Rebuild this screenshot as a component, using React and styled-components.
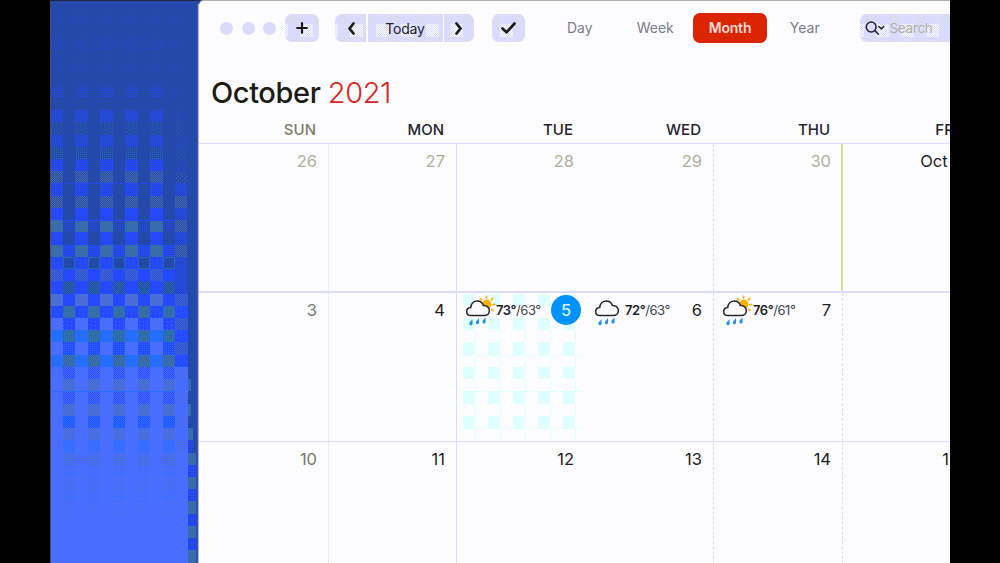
import React from "react";
import styled, { createGlobalStyle } from "styled-components";

const INK = {
  dark: "#2449aa",
  mid: "#2449ff",
  teal: "#246daa",
  grey: "#496daa",
  cyan: "#246dff",
  light: "#496dff",
  lilac: "#dbdbff",
  ice: "#dbffff",
  sand: "#dbdbaa",
  white: "#fcfcff"
};

// pixels lit in a 4x4 dither tile
const DENSITY = {
  1: [[1, 1]],
  2: [[0, 0], [2, 2]],
  3: [[0, 0], [2, 0], [0, 2], [2, 2]],
  4: [[0, 0], [2, 0], [0, 2], [2, 2], [1, 1], [3, 3]],
  5: [[0, 0], [2, 0], [1, 1], [3, 1], [0, 2], [2, 2], [1, 3], [3, 3]],
  6: [[0, 0], [1, 0], [2, 0], [3, 0], [0, 1], [2, 1], [0, 2], [1, 2], [2, 2], [3, 2], [0, 3], [2, 3]]
};

const CELL_W = 12.5;
const CELL_H = 12.23;

// [row, even base, even ink, even density, odd base, odd ink, odd density]
const WALL = [
  [1, "dark", "mid", 1, "dark"],
  [3, "dark", "mid", 2, "dark"],
  [5, "dark", "mid", 1, "dark"],
  [7, "dark", "mid", 3, "dark"],
  [9, "dark", "mid", 5, "dark"],
  [10, "dark", "teal", 2, "dark"],
  [11, "dark", "mid", 5, "dark"],
  [12, "dark", "teal", 3, "dark"],
  [13, "dark", "mid", 6, "dark"],
  [14, "dark", "grey", 5, "dark"],
  [15, "mid", "dark", 3, "dark"],
  [16, "dark", "grey", 5, "dark"],
  [17, "mid", "dark", 1, "dark"],
  [18, "teal", "grey", 5, "dark", "mid", 3],
  [19, "mid", "dark", 2, "dark"],
  [20, "teal", "grey", 5, "mid", "dark", 3],
  [21, "mid", "dark", 1, "dark"],
  [22, "mid", "grey", 5, "mid"],
  [23, "mid", "mid", 1, "dark", "teal", 5],
  [24, "light", "grey", 5, "mid"],
  [25, "mid", "cyan", 1, "teal", "grey", 4],
  [26, "light", "grey", 1, "mid", "light", 1],
  [27, "cyan", "cyan", 1, "teal", "grey", 3],
  [28, "light", "light", 1, "mid", "cyan", 3],
  [29, "cyan", "cyan", 1, "teal", "grey", 5],
  [30, "light", "light", 1, "light", "mid", 5],
  [31, "light", "light", 1, "light", "grey", 5],
  [32, "light", "light", 1, "light", "mid", 5],
  [33, "light", "light", 1, "light", "grey", 5],
  [34, "light", "light", 1, "cyan", "mid", 4],
  [35, "light", "light", 1, "light", "grey", 4],
  [36, "light", "light", 1, "light", "cyan", 5],
  [37, "light", "light", 1, "light", "grey", 3],
  [38, "light", "light", 1, "light", "cyan", 2],
  [39, "light", "light", 1, "light", "grey", 2],
  [40, "light", "light", 1, "light", "cyan", 2],
  [41, "light", "light", 1, "light", "grey", 1]
];

function Tile({ col, row, width, base, ink, density }) {
  const x = Math.round(col * CELL_W);
  const y = Math.round(row * CELL_H);
  const w = width || Math.round((col + 1) * CELL_W) - x;
  const h = Math.round((row + 1) * CELL_H) - y;
  return (
    <>
      {base && <rect x={x} y={y} width={w} height={h} fill={INK[base]} />}
      {ink && (
        <rect x={x} y={y} width={w} height={h} fill={`url(#${ink}${density})`} />
      )}
    </>
  );
}

function DitherDefs() {
  return (
    <Hidden width="0" height="0" aria-hidden="true">
      <defs>
        {Object.keys(INK).map(ink =>
          Object.keys(DENSITY).map(d => (
            <pattern
              key={ink + d}
              id={ink + d}
              width="4"
              height="4"
              patternUnits="userSpaceOnUse"
            >
              {DENSITY[d].map(([x, y]) => (
                <rect key={`${x}-${y}`} x={x} y={y} width="1" height="1" fill={INK[ink]} />
              ))}
            </pattern>
          ))
        )}
      </defs>
    </Hidden>
  );
}

function Wallpaper() {
  return (
    <WallSvg width="150" height="563" viewBox="0 0 150 563" shapeRendering="crispEdges">
      <rect width="150" height="563" fill={INK.dark} />
      <rect y="514" width="138" height="49" fill={INK.light} />
      {WALL.map(([row, aBase, aInk, aD, bBase, bInk, bD]) => (
        <g key={row}>
          {[0, 2, 4, 6, 8].map(col => (
            <Tile key={col} col={col} row={row} base={aBase} ink={aInk} density={aD} />
          ))}
          {[1, 3, 5, 7, 9].map(col => (
            <Tile key={col} col={col} row={row} base={bBase} ink={bInk} density={bD} />
          ))}
          {row < 24 ? (
            <Tile
              col={10}
              row={row}
              width={row < 11 ? 7 : 12}
              ink={aBase === "mid" ? "mid" : aInk}
              density={row < 8 ? 1 : row < 15 ? 2 : 5}
            />
          ) : (
            <Tile
              col={10}
              row={row}
              base={row < 30 ? "mid" : "light"}
              ink={row > 36 ? null : row % 2 ? "cyan" : "grey"}
              density={row % 2 ? 2 : row < 30 ? 5 : 2}
            />
          )}
        </g>
      ))}
      {[30, 31, 33, 34, 35, 36, 37, 38, 39, 40, 41, 42, 43, 44, 45].map(row => (
        <Tile
          key={row}
          col={11}
          row={row}
          width={row < 34 ? 3 : row < 37 ? 5 : 8}
          base={row % 2 ? "teal" : row > 35 ? "mid" : null}
          ink={row % 2 ? "grey" : "dark"}
          density={row % 2 ? 5 : 3}
        />
      ))}
      <path d="M12 220.5H125" stroke={INK.mid} />
      <path d="M0 391.5H125" stroke={INK.cyan} />
      <path d="M0 183.5H115" stroke={INK.mid} strokeDasharray="3 2" />
      {[1, 3, 5, 7, 9].map(col => (
        <rect
          key={col}
          x={Math.round(col * CELL_W) + 0.5}
          y="257.5"
          width="11"
          height="11"
          fill="none"
          stroke={INK.teal}
        />
      ))}
      <rect width="1" height="563" fill="#49496d" />
      <rect width="150" height="1" fill="#242449" />
      <rect x="147" y="4" width="1" height="559" fill="#4955aa" />
      <rect x="148" y="4" width="1" height="559" fill="#a8b4e0" />
    </WallSvg>
  );
}

// dither noise left on the tinted toolbar controls, laid on the same grid
function Noise({ x, w }) {
  const tiles = [];
  for (let col = Math.floor((x - 50) / CELL_W); col * CELL_W + 50 < x + w; col++) {
    tiles.push(col);
  }
  return (
    <NoiseSvg
      viewBox={`${x - 50} 14 ${w} 28`}
      width={w}
      height="28"
      shapeRendering="crispEdges"
    >
      {tiles.map(col => (
        <g key={col}>
          {col % 2 ? (
            <Tile col={col} row={1} ink="sand" density={2} />
          ) : (
            <Tile col={col} row={2} ink="white" density={5} />
          )}
          {col % 2 ? <Tile col={col} row={3} ink="sand" density={2} /> : null}
        </g>
      ))}
    </NoiseSvg>
  );
}

function TodayNoise() {
  const cols = [33, 35, 37, 39, 41];
  return (
    <TodaySvg viewBox="407 293 128 148" width="128" height="148" shapeRendering="crispEdges">
      {[24, 26, 28, 30, 32, 34].map(row =>
        cols.map(col => (
          <Tile key={`${row}-${col}`} col={col} row={row} base="ice" ink="white" density={2} />
        ))
      )}
      {[27, 29, 31, 33, 35].map(row =>
        cols.map(col => {
          const x = Math.round((col + 1) * CELL_W) + 0.5;
          const y = Math.round(row * CELL_H);
          return (
            <path
              key={`${row}-${col}`}
              d={`M${x} ${y}v12`}
              stroke={INK.ice}
              fill="none"
            />
          );
        })
      )}
      <path d="M410 355.5H533M410 391.5H533M410 428.5H533" stroke={INK.ice} strokeDasharray="12 3 7 3" />
    </TodaySvg>
  );
}

function Weather({ sun }) {
  return (
    <WeatherSvg width="31" height="32" viewBox="0 0 31 32" fill="none">
      {sun && (
        <g>
          <circle cx="21.8" cy="9.2" r="4.600" fill="#ffb000" />
          <path
            d="M21.500 1.300v1.600M15.500 3.900l1.100 1.200M27.600 3.400l-1.200 1.400M29.800 9.600h-1.700M28 15.500l-1.300-1.200"
            stroke="#ffb000"
            strokeWidth="1.8"
            strokeLinecap="round"
          />
        </g>
      )}
      <path
        d="M6.200 20.600C3.500 20.600 1.700 19 1.700 16.700c0-2.400 1.700-4 4-4.100C6.100 8.700 8.700 6 12.200 6c3 0 5.300 1.700 6.200 4.500 3.500-.2 6 2 6 5.100 0 3-2.200 5-5.200 5z"
        fill="#fcfcff"
        stroke="#24242c"
        strokeWidth="1.500"
      />
      {[5.500, 12, 18.500].map((x, i) => (
        <path
          key={x}
          transform={`translate(${x} ${25.200 - i * 0.900})`}
          d="M2 -1.200C.5 .8-1.500 2.400-1.100 4c.4 1.500 2.700 1.300 3.100-.2.300-1.300 0-3.300 0-5z"
          fill="#1c92db"
        />
      ))}
    </WeatherSvg>
  );
}

const DAYS = ["SUN", "MON", "TUE", "WED", "THU", "FRI"];

const WEEKS = [
  [
    { day: "26", muted: true },
    { day: "27", muted: true },
    { day: "28", muted: true },
    { day: "29", muted: true },
    { day: "30", muted: true },
    { day: "Oct 1" }
  ],
  [
    { day: "3", weekend: true },
    { day: "4" },
    { day: "5", today: true, high: "73°", low: "63°", sun: true },
    { day: "6", high: "72°", low: "63°" },
    { day: "7", high: "76°", low: "61°", sun: true },
    { day: "" }
  ],
  [
    { day: "10", weekend: true },
    { day: "11" },
    { day: "12" },
    { day: "13" },
    { day: "14" },
    { day: "15" }
  ]
];

const LINES = ["dotted", "solid", "none", "dashed", "dashed", "none"];

function Day({ data, line, edge }) {
  return (
    <Cell $line={line} $edge={edge}>
      {data.today && <TodayNoise />}
      {data.high && (
        <Forecast>
          <Weather sun={data.sun} />
          <Temps>
            <b>{data.high}</b>/{data.low}
          </Temps>
        </Forecast>
      )}
      {data.today ? (
        <TodayBadge>{data.day}</TodayBadge>
      ) : (
        <DayNumber $muted={data.muted} $weekend={data.weekend}>
          {data.day}
        </DayNumber>
      )}
    </Cell>
  );
}

export default function App() {
  return (
    <Screen>
      <GlobalStyle />
      <DitherDefs />
      <Desktop>
        <Wallpaper />
        <Window>
          <Toolbar>
            <Lights>
              <Light />
              <Light />
              <Light />
            </Lights>
            <ToolButton $width={34} $gap={9}>
              <Noise x={285} w={34} />
              <Glyph width="12" height="12" viewBox="0 0 12 12">
                <path d="M6 1.200v9.600M1.200 6h9.600" />
              </Glyph>
            </ToolButton>
            <Pager>
              <ToolButton $width={31} $side="left">
                <Noise x={335} w={31} />
                <Glyph $heavy width="8" height="13" viewBox="0 0 8 13">
                  <path d="M6.500 1.500L2.500 6.500l4 5" />
                </Glyph>
              </ToolButton>
              <ToolButton $width={75} $side="middle">
                <Noise x={367} w={75} />
                <Label>Today</Label>
              </ToolButton>
              <ToolButton $width={30} $side="right">
                <Noise x={444} w={30} />
                <Glyph $heavy width="8" height="13" viewBox="0 0 8 13">
                  <path d="M1.500 1.500l4 5-4 5" />
                </Glyph>
              </ToolButton>
            </Pager>
            <ToolButton $width={33} $gap={18}>
              <Noise x={492} w={33} />
              <Glyph $heavy width="15" height="12" viewBox="0 0 15 12">
                <path d="M1.500 6.500l4 3.800L13.500 1.500" />
              </Glyph>
            </ToolButton>
            <Views>
              <View>Day</View>
              <View>Week</View>
              <View $active>Month</View>
              <View>Year</View>
            </Views>
            <Search>
              <Noise x={859} w={91} />
              <SearchIcon width="20" height="15" viewBox="0 0 20 15">
                <circle cx="6.200" cy="6" r="4.900" />
                <path d="M9.800 9.600l3.700 3.700M13.800 5.500l2.500 2.400 2.500-2.400" />
              </SearchIcon>
              <Placeholder>Search</Placeholder>
            </Search>
          </Toolbar>
          <Title>
            October <Year>2021</Year>
          </Title>
          <WeekHeader>
            {DAYS.map(name => (
              <DayName key={name} $weekend={name === "SUN"}>
                {name}
              </DayName>
            ))}
          </WeekHeader>
          {WEEKS.map((week, i) => (
            <Week key={i} $heavy={i === 1}>
              {week.map((data, j) => (
                <Day
                  key={j}
                  data={data}
                  line={LINES[j]}
                  edge={i === 0 && j === 4}
                />
              ))}
            </Week>
          ))}
        </Window>
      </Desktop>
    </Screen>
  );
}

const GlobalStyle = createGlobalStyle`
  * {
    box-sizing: border-box;
  }

  body {
    margin: 0;
    background: #000;
    overflow: hidden;
  }
`;

const Screen = styled.div`
  width: 1000px;
  height: 563px;
  padding: 0 50px;
  background: #000;
  font-family: Inter, "Liberation Sans", sans-serif;
  overflow: hidden;
`;

const Hidden = styled.svg`
  position: absolute;
`;

const Desktop = styled.div`
  display: flex;
  height: 563px;
  overflow: hidden;
  background: #2449aa;
`;

const WallSvg = styled.svg`
  flex: none;
  display: block;
  margin-right: -1px;
`;

const Window = styled.main`
  flex: none;
  display: flex;
  flex-direction: column;
  width: 772px;
  height: 600px;
  background: #fcfcff;
  border-top: 1px solid #b0b0a8;
  border-top-left-radius: 5px;
`;

const Toolbar = styled.header`
  display: flex;
  align-items: center;
  height: 54px;
  padding-left: 21px;
`;

const Lights = styled.div`
  display: flex;
  gap: 8.5px;
`;

const Light = styled.span`
  width: 13px;
  height: 13px;
  border-radius: 50%;
  background: #dbdbff;
`;

const radius = {
  left: "7px 0 0 7px",
  middle: "0",
  right: "0 7px 7px 0"
};

const ToolButton = styled.button`
  position: relative;
  display: flex;
  flex: none;
  align-items: center;
  justify-content: center;
  width: ${p => p.$width}px;
  height: 28px;
  margin: 0 0 0 ${p => p.$gap || 0}px;
  padding: 0;
  border: 0;
  border-radius: ${p => radius[p.$side] || "7px"};
  background: #dbdbff;
  color: #242424;
  font-family: inherit;
  overflow: hidden;
`;

const NoiseSvg = styled.svg`
  position: absolute;
  inset: 0;
`;

const Glyph = styled.svg`
  position: relative;
  fill: none;
  stroke: #1c1c14;
  stroke-width: ${p => (p.$heavy ? 2.7 : 2.2)};
  stroke-linecap: round;
  stroke-linejoin: round;
`;

const Pager = styled.div`
  display: flex;
  gap: 1.5px;
  margin-left: 16px;
`;

const Label = styled.span`
  position: relative;
  font-size: 14px;
  letter-spacing: -0.2px;
`;

const Views = styled.nav`
  display: flex;
  margin-left: 17px;
`;

const View = styled.span`
  width: ${p => (p.$active ? 74 : 75.5)}px;
  height: 30px;
  line-height: 30px;
  border-radius: 7px;
  text-align: center;
  font-size: 14px;
  font-weight: ${p => (p.$active ? 600 : 400)};
  letter-spacing: ${p => (p.$active ? "-0.2px" : "0")};
  color: ${p => (p.$active ? "#ffdbdb" : "#7c7c88")};
  background: ${p => (p.$active ? "#db2400" : "transparent")};
`;

const Search = styled.div`
  position: relative;
  display: flex;
  align-items: center;
  gap: 5px;
  width: 120px;
  height: 28px;
  margin-left: 17px;
  padding-left: 5px;
  border-radius: 7px;
  background: #dbdbff;
  overflow: hidden;
`;

const SearchIcon = styled.svg`
  position: relative;
  fill: none;
  stroke: #24242c;
  stroke-width: 1.5;
  stroke-linecap: round;
`;

const Placeholder = styled.span`
  position: relative;
  font-size: 13.5px;
  letter-spacing: -0.3px;
  color: #b4b49c;
`;

const Title = styled.h1`
  height: 62px;
  margin: 0;
  padding: 20px 0 0 12px;
  font-size: 29px;
  line-height: 35px;
  font-weight: 500;
  letter-spacing: -0.4px;
  color: #1c1c14;
`;

const Year = styled.span`
  font-weight: 300;
  color: #db2424;
`;

const columns = "130px 128px 129px 128px 129px 128px";

const WeekHeader = styled.div`
  display: grid;
  grid-template-columns: ${columns};
  height: 26px;
`;

const DayName = styled.span`
  padding-right: 13px;
  text-align: right;
  font-size: 15px;
  line-height: 25px;
  font-weight: 500;
  color: ${p => (p.$weekend ? "#7c7c68" : "#24242c")};
`;

const Week = styled.section`
  flex: none;
  display: grid;
  grid-template-columns: ${columns};
  height: ${p => (p.$heavy ? 150 : 148)}px;
  border-top: ${p => (p.$heavy ? 2 : 1)}px solid #dbdbff;
`;

const Cell = styled.div`
  position: relative;
  display: flex;
  align-items: flex-start;
  justify-content: flex-end;
  padding: 4px ${p => (p.$edge ? 10 : p.$line === "none" ? 12 : 11)}px 0 0;
  border-right: ${p =>
    p.$edge
      ? "2px solid #dbdb92"
      : p.$line === "none"
      ? "0"
      : `1px ${p.$line} #dbdbff`};
`;

const TodaySvg = styled.svg`
  position: absolute;
  left: 0;
  top: 0;
`;

const DayNumber = styled.span`
  position: relative;
  font-size: 16.5px;
  line-height: 26px;
  font-weight: 400;
  color: ${p => (p.$muted ? "#b0b098" : p.$weekend ? "#78786a" : "#1c1c20")};
`;

const TodayBadge = styled.span`
  position: relative;
  width: 30px;
  height: 30px;
  margin: -2px -7px 0 0;
  border-radius: 50%;
  background: #0092ff;
  color: #dbf0ff;
  font-size: 16.5px;
  font-weight: 500;
  line-height: 30px;
  text-align: center;
`;

const Forecast = styled.div`
  position: relative;
  display: flex;
  align-items: flex-start;
  margin-right: auto;
  padding-left: 8px;
`;

const WeatherSvg = styled.svg`
  margin-top: -2px;
`;

const Temps = styled.span`
  font-size: 13px;
  line-height: 27px;
  letter-spacing: -0.45px;
  color: #44444c;

  b {
    font-weight: 600;
    color: #24242c;
  }
`;
